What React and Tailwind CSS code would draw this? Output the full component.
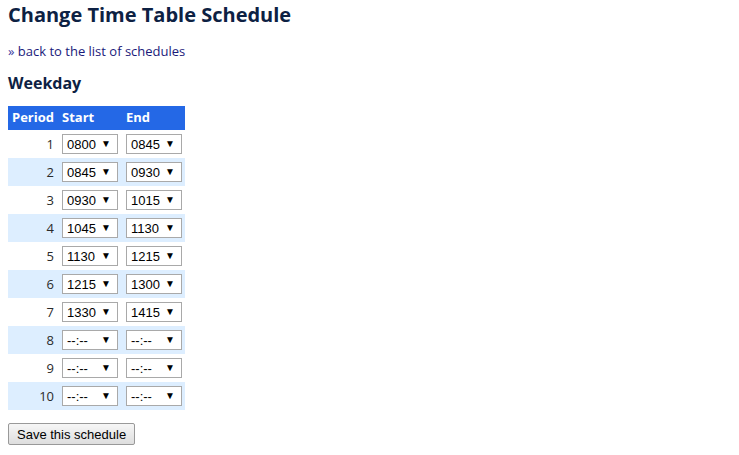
import React from "react";

const rows = [
  ["1", "0800", "0845"],
  ["2", "0845", "0930"],
  ["3", "0930", "1015"],
  ["4", "1045", "1130"],
  ["5", "1130", "1215"],
  ["6", "1215", "1300"],
  ["7", "1330", "1415"],
  ["8", "--:--", "--:--"],
  ["9", "--:--", "--:--"],
  ["10", "--:--", "--:--"],
];

function Sel({ value }) {
  return (
    <div className="flex h-[20px] w-[56px] items-center justify-between border border-[#a9a9a9] bg-white pl-[4px] pr-[6px] text-[13px] text-black [font-family:'Liberation_Sans',Arial,sans-serif]">
      <span className="leading-none">{value}</span>
      <span className="text-[10px] leading-none">▼</span>
    </div>
  );
}

export default function App() {
  return (
    <div className="min-h-[455px] bg-white px-[8px] pt-[1px] text-[#10204a] [font-family:'Open_Sans',sans-serif]">
      <h1 className="text-[20px] font-bold leading-[28px] text-[#0d2143]">Change Time Table Schedule</h1>
      <div className="mt-[14px] text-[13px] leading-[16px] text-[#1a1a7a]">
        <span className="text-[#3a3aa0]">»</span> back to the list of schedules
      </div>
      <h2 className="mt-[14px] text-[16px] font-bold leading-[20px] text-[#0d2143]">Weekday</h2>
      <table className="mt-[13px] border-collapse">
        <thead>
          <tr className="h-[24px] bg-[#2468e6] text-[13px] font-bold text-white">
            <th className="w-[50px] px-[4px] text-left">Period</th>
            <th className="w-[63px] px-[4px] text-left">Start</th>
            <th className="w-[63px] px-[4px] text-left">End</th>
          </tr>
        </thead>
        <tbody>
          {rows.map((r, i) => (
            <tr key={r[0]} className={i % 2 === 1 ? "h-[28px] bg-[#ddeeff]" : "h-[28px] bg-white"}>
              <td className="px-[4px] text-right align-middle text-[13px] leading-none text-[#2a2a2a]">
                {r[0]}
              </td>
              <td className="px-[4px] align-middle">
                <Sel value={r[1]} />
              </td>
              <td className="pl-[4px] pr-[3px] align-middle">
                <Sel value={r[2]} />
              </td>
            </tr>
          ))}
        </tbody>
      </table>
      <button className="mt-[13px] h-[22px] rounded-[2px] border border-[#999] bg-gradient-to-b from-[#f6f6f6] to-[#dedede] px-[8px] text-[13px] leading-none text-black [font-family:'Liberation_Sans',Arial,sans-serif]">
        Save this schedule
      </button>
    </div>
  );
}
